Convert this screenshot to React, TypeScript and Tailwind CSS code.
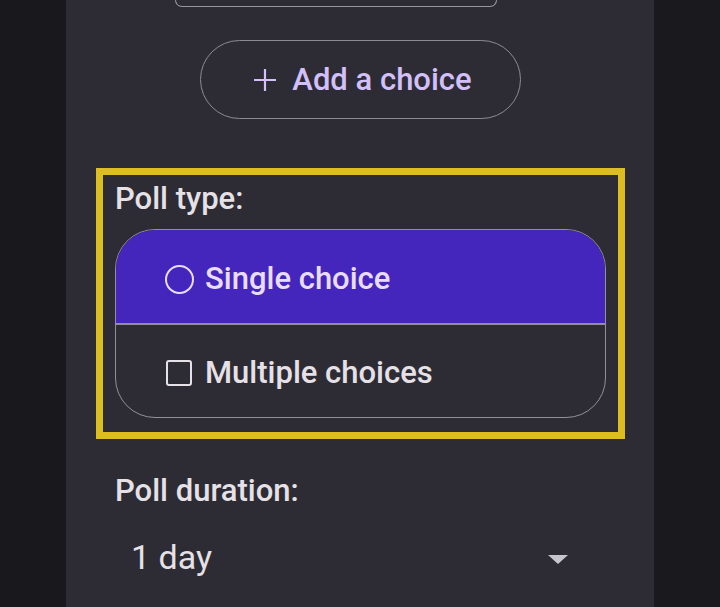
export default function App() {
  return (
    <div className="flex h-[607px] w-[720px] overflow-hidden bg-[#19181d] font-['Roboto',sans-serif]">
      <div className="ml-[66px] flex h-full w-[588px] flex-col bg-[#2d2c34]">
        {/* bottom edge of the last choice input */}
        <div className="ml-[109px] h-[7px] w-[322px] rounded-b-[8px] border-x-[1.5px] border-b-[1.5px] border-[#9a96a0]" />

        <button className="mx-auto mt-[33px] flex h-[79px] w-[321px] items-center justify-center gap-[16px] rounded-full border-[1.5px] border-[#8e8a94] pl-[6px] text-[#d3c0fb]">
          <svg width="22" height="22" viewBox="0 0 22 22">
            <path d="M11 0 V22 M0 11 H22" stroke="currentColor" strokeWidth="2.2" />
          </svg>
          <span className="text-[31px] font-medium leading-none">Add a choice</span>
        </button>

        <div className="ml-[30px] mt-[49px] flex h-[271px] w-[529px] flex-col border-[7px] border-[#dcbd22] px-[12px]">
          <div className="mt-[6px] text-[31px] font-medium leading-[36px] text-[#e6e1e6]">Poll type:</div>
          <div className="mt-[12px] flex flex-col overflow-hidden rounded-[40px] border-[1.5px] border-[#938f99]">
            <div className="flex h-[93px] items-center gap-[11px] bg-[#4526bd] pl-[49px] pt-[6px] text-[#e9ddff]">
              <span className="h-[29px] w-[29px] rounded-full border-[2.5px] border-[#e9ddff]" />
              <span className="text-[31px] font-medium">Single choice</span>
            </div>
            <div className="h-[1.5px] bg-[#938f99]" />
            <div className="flex h-[92px] items-center gap-[13px] pl-[50px] pt-[5px] text-[#e6e1e6]">
              <span className="h-[26px] w-[26px] rounded-[3px] border-[2.5px] border-[#e6e1e6]" />
              <span className="text-[31px] font-medium">Multiple choices</span>
            </div>
          </div>
        </div>

        <div className="ml-[49px] mt-[34px] text-[31px] font-medium leading-[36px] text-[#e6e1e6]">Poll duration:</div>
        <div className="ml-[65px] mr-[86px] mt-[26px] flex items-center justify-between">
          <span className="text-[34px] leading-[44px] text-[#e6e1e6]">1 day</span>
          <svg width="20" height="10" viewBox="0 0 20 10" className="mt-[6px]">
            <path d="M0 0 L20 0 L10 9 Z" fill="#c9c5cf" />
          </svg>
        </div>
      </div>
      <div className="flex-1 bg-[#1a191e]" />
    </div>
  )
}
